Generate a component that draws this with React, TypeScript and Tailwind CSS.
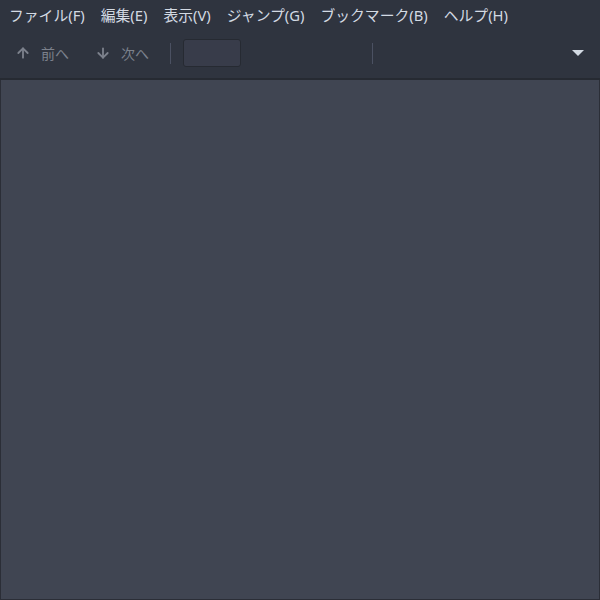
import { ArrowUp, ArrowDown } from 'lucide-react';

const menus = ['ファイル(F)', '編集(E)', '表示(V)', 'ジャンプ(G)', 'ブックマーク(B)', 'ヘルプ(H)'];

export default function App() {
  return (
    <div
      className="flex h-[600px] w-[600px] flex-col bg-[#2f343f] text-[14px] text-[#d3dae3]"
      style={{ fontFamily: '"Noto Sans", "Noto Sans CJK JP", sans-serif' }}
    >
      {/* menubar */}
      <div className="flex h-[30px] items-center pl-[1px] text-[14.8px]">
        {menus.map((m) => (
          <span key={m} className="px-2 leading-none">
            {m}
          </span>
        ))}
      </div>

      {/* toolbar */}
      <div className="flex h-[50px] items-center border-b-2 border-[#262a32] pb-[2px] pl-[15px] pr-[16px] text-[#7c818c]">
        <button className="flex items-center gap-[10px]">
          <ArrowUp size={16} strokeWidth={2.75} />
          <span>前へ</span>
        </button>
        <button className="ml-[26px] flex items-center gap-[10px]">
          <ArrowDown size={16} strokeWidth={2.75} />
          <span>次へ</span>
        </button>
        <div className="ml-[21px] h-[21px] w-px bg-[#4b5162]" />
        <div className="ml-[12px] h-[28px] w-[58px] rounded-[3px] border border-[#262a32] bg-[#383c4a]" />
        <div className="ml-[131px] h-[21px] w-px bg-[#4b5162]" />
        <div className="ml-auto h-0 w-0 border-x-[6px] border-t-[6px] border-x-transparent border-t-[#d3dae3]" />
      </div>

      {/* document area */}
      <div className="flex-1 border-x border-b border-[#2b2e37] bg-[#404552]" />
    </div>
  );
}
